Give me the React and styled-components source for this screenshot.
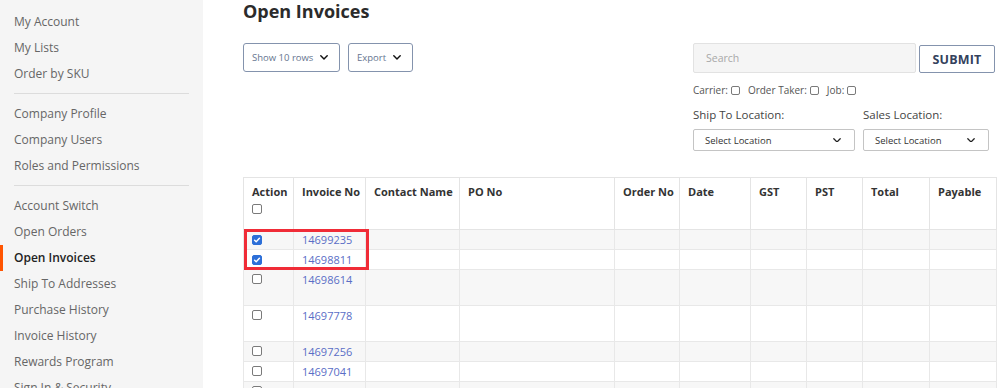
import React from "react";
import styled, { createGlobalStyle } from "styled-components";

const GlobalStyle = createGlobalStyle`
  html, body {
    margin: 0;
    padding: 0;
    background: #fff;
    font-family: "Open Sans", "Liberation Sans", sans-serif;
    color: #333;
  }
  * {
    box-sizing: border-box;
  }
`;

const Page = styled.div`
  display: flex;
  height: 100vh;
  overflow: hidden;
`;

const Sidebar = styled.nav`
  width: 203px;
  flex: none;
  background: #f5f5f5;
  padding-top: 9px;
`;

const NavItem = styled.div`
  height: 26px;
  line-height: 26px;
  padding-left: 11px;
  font-size: 12px;
  color: ${(p) => (p.$active ? "#222" : "#666")};
  font-weight: ${(p) => (p.$active ? 600 : 400)};
  white-space: nowrap;
  border-left: 3px solid ${(p) => (p.$active ? "#ff5501" : "transparent")};
`;

const NavDivider = styled.div`
  height: 1px;
  background: #dcdcdc;
  margin: 6px 14px 7px;
`;

const Main = styled.main`
  flex: 1;
  padding: 0 4px 0 40px;
  min-width: 0;
`;

const Title = styled.h1`
  margin: 0;
  font-size: 18px;
  line-height: 23px;
  font-weight: 700;
  color: #2b2b2b;
`;

const Toolbar = styled.div`
  display: flex;
  justify-content: space-between;
  align-items: flex-start;
  margin-top: 20px;
`;

const ButtonGroup = styled.div`
  display: flex;
  gap: 8px;
`;

const DropButton = styled.button`
  display: flex;
  align-items: center;
  justify-content: space-between;
  width: ${(p) => p.$w}px;
  height: 29px;
  padding: 0 11px 0 8px;
  border: 1px solid #8493ad;
  border-radius: 3px;
  background: #fff;
  font-family: inherit;
  font-size: 9.5px;
  color: #66758f;
`;

const Filters = styled.div`
  width: 303px;
`;

const SearchRow = styled.div`
  display: flex;
  align-items: flex-end;
  gap: 3px;
`;

const SearchInput = styled.div`
  width: 223px;
  height: 30px;
  background: #f5f5f5;
  border: 1px solid #e2e2e2;
  border-radius: 2px;
  padding-left: 12px;
  font-size: 10.5px;
  line-height: 28px;
  color: #a8a8a8;
`;

const SubmitButton = styled.button`
  width: 76px;
  height: 28px;
  border: 1px solid #8493ad;
  border-radius: 2px;
  background: #fff;
  font-family: inherit;
  font-size: 12.5px;
  font-weight: 700;
  color: #33415c;
  letter-spacing: 0.2px;
`;

const CheckRow = styled.div`
  display: flex;
  align-items: center;
  gap: 8px;
  margin-top: 10px;
  height: 14px;
  font-size: 10px;
  color: #555;
`;

const CheckLabel = styled.label`
  display: flex;
  align-items: center;
  gap: 3px;
`;

const Box = styled.span`
  display: inline-flex;
  align-items: center;
  justify-content: center;
  width: ${(p) => p.$size || 10}px;
  height: ${(p) => p.$size || 10}px;
  border: 1px solid ${(p) => (p.$checked ? "#2d6fd8" : "#7a7a7a")};
  border-radius: 2px;
  background: ${(p) => (p.$checked ? "#2d6fd8" : "#fff")};
  flex: none;
`;

const LocationGrid = styled.div`
  display: grid;
  grid-template-columns: 162px 126px;
  column-gap: 8px;
  margin-top: 10px;
`;

const LocLabel = styled.div`
  font-size: 11.5px;
  line-height: 16px;
  color: #444;
  margin-bottom: 6px;
`;

const Select = styled.div`
  display: flex;
  align-items: center;
  justify-content: space-between;
  height: 22px;
  border: 1px solid #c4c4c4;
  border-radius: 2px;
  padding: 0 13px 0 11px;
  font-size: 9.5px;
  color: #333;
`;

const TableWrap = styled.div`
  position: relative;
  margin-top: 26px;
`;

const Table = styled.table`
  width: 753px;
  border-collapse: collapse;
  table-layout: fixed;
  font-size: 11px;
  border: 1px solid #e4e4e4;
`;

const Th = styled.th`
  height: 52px;
  padding: 7px 9px 0 8px;
  vertical-align: top;
  text-align: left;
  font-weight: 700;
  color: #333;
  line-height: 14px;
  border: 1px solid #e4e4e4;
  white-space: nowrap;
`;

const Tr = styled.tr`
  background: ${(p) => (p.$striped ? "#f7f7f7" : "#fff")};
  height: ${(p) => p.$h}px;
`;

const Td = styled.td`
  padding: 3px 9px 0 8px;
  vertical-align: top;
  line-height: 14px;
  border: 1px solid #e8e8e8;
  color: #444;
  white-space: nowrap;
  overflow: hidden;
`;

const Link = styled.a`
  color: #5a6ec6;
  text-decoration: none;
`;

const HeadBox = styled.div`
  margin-top: 4px;
`;

const Highlight = styled.div`
  position: absolute;
  left: 1px;
  top: 52px;
  width: 125px;
  height: 41px;
  border: 3px solid #f02c37;
  pointer-events: none;
`;

const Chevron = ({ w = 8, stroke = 1.8, color = "#111" }) => (
  <svg width={w} height={w * 0.6} viewBox="0 0 10 6" fill="none">
    <path d="M1 1l4 4 4-4" stroke={color} strokeWidth={stroke} strokeLinecap="round" strokeLinejoin="round" />
  </svg>
);

const Check = ({ checked, size }) => (
  <Box $checked={checked} $size={size}>
    {checked && (
      <svg width="8" height="8" viewBox="0 0 10 10" fill="none">
        <path d="M2 5.2l2 2L8 2.8" stroke="#fff" strokeWidth="1.8" strokeLinecap="round" strokeLinejoin="round" />
      </svg>
    )}
  </Box>
);

const nav = [
  ["My Account", "My Lists", "Order by SKU"],
  ["Company Profile", "Company Users", "Roles and Permissions"],
  [
    "Account Switch",
    "Open Orders",
    "Open Invoices",
    "Ship To Addresses",
    "Purchase History",
    "Invoice History",
    "Rewards Program",
    "Sign In & Security",
  ],
];

const columns = [
  ["Action", 50],
  ["Invoice No", 72],
  ["Contact Name", 94],
  ["PO No", 155],
  ["Order No", 65],
  ["Date", 71],
  ["GST", 56],
  ["PST", 56],
  ["Total", 67],
  ["Payable", 67],
];

const rows = [
  { no: "14699235", checked: true, h: 20 },
  { no: "14698811", checked: true, h: 20 },
  { no: "14698614", h: 36 },
  { no: "14697778", h: 36 },
  { no: "14697256", h: 20 },
  { no: "14697041", h: 20 },
  {
    no: "14696997",
    h: 20,
    po: "Rust Valley Supply Mo",
    order: "1096989",
    date: "2024-10-01",
    gst: "0.07",
    pst: "1.39",
    total: "10.46",
    payable: "10.46",
  },
];

export default function App() {
  return (
    <>
      <GlobalStyle />
      <Page>
        <Sidebar>
          {nav.map((group, gi) => (
            <React.Fragment key={gi}>
              {gi > 0 && <NavDivider />}
              {group.map((item) => (
                <NavItem key={item} $active={item === "Open Invoices"}>
                  {item}
                </NavItem>
              ))}
            </React.Fragment>
          ))}
        </Sidebar>

        <Main>
          <Title>Open Invoices</Title>

          <Toolbar>
            <ButtonGroup>
              <DropButton $w={97}>
                Show 10 rows <Chevron />
              </DropButton>
              <DropButton $w={65}>
                Export <Chevron />
              </DropButton>
            </ButtonGroup>

            <Filters>
              <SearchRow>
                <SearchInput>Search</SearchInput>
                <SubmitButton>SUBMIT</SubmitButton>
              </SearchRow>
              <CheckRow>
                <CheckLabel>
                  Carrier: <Check size={9} />
                </CheckLabel>
                <CheckLabel>
                  Order Taker: <Check size={9} />
                </CheckLabel>
                <CheckLabel>
                  Job: <Check size={9} />
                </CheckLabel>
              </CheckRow>
              <LocationGrid>
                <div>
                  <LocLabel>Ship To Location:</LocLabel>
                  <Select>
                    Select Location <Chevron w={8} stroke={1.6} color="#222" />
                  </Select>
                </div>
                <div>
                  <LocLabel>Sales Location:</LocLabel>
                  <Select>
                    Select Location <Chevron w={8} stroke={1.6} color="#222" />
                  </Select>
                </div>
              </LocationGrid>
            </Filters>
          </Toolbar>

          <TableWrap>
            <Table>
              <colgroup>
                {columns.map(([name, w]) => (
                  <col key={name} style={{ width: w }} />
                ))}
              </colgroup>
              <thead>
                <tr>
                  {columns.map(([name]) => (
                    <Th key={name}>
                      {name}
                      {name === "Action" && (
                        <HeadBox>
                          <Check size={10} />
                        </HeadBox>
                      )}
                    </Th>
                  ))}
                </tr>
              </thead>
              <tbody>
                {rows.map((r, i) => (
                  <Tr key={r.no} $h={r.h} $striped={i % 2 === 0}>
                    <Td>
                      <Check checked={r.checked} size={10} />
                    </Td>
                    <Td>
                      <Link href="#">{r.no}</Link>
                    </Td>
                    <Td />
                    <Td>{r.po}</Td>
                    <Td>{r.order}</Td>
                    <Td>{r.date}</Td>
                    <Td>{r.gst}</Td>
                    <Td>{r.pst}</Td>
                    <Td>{r.total}</Td>
                    <Td>{r.payable}</Td>
                  </Tr>
                ))}
              </tbody>
            </Table>
            <Highlight />
          </TableWrap>
        </Main>
      </Page>
    </>
  );
}
